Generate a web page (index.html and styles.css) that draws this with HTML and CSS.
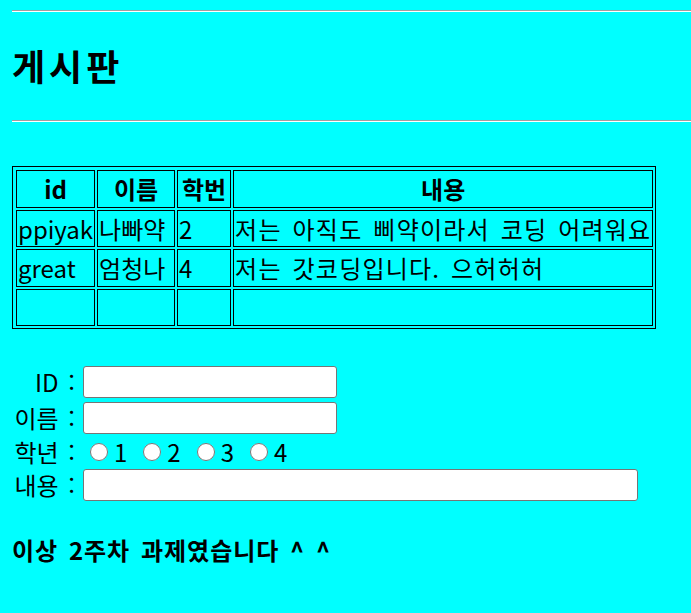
FILE: index.html
```html
<!DOCTYPE html>
<html lang="ko">
<head>
    <meta charset="UTF-8">
    <meta name="viewport" content="width=device-width, initial-scale=1.0">
    <title>게시판</title>
    <link rel="stylesheet" href="styles.css">
</head>
<body>
    <hr class="line">
    <h1 class="title">게시판</h1>
    <hr class="line">

    <table class="board">
        <tr>
            <th class="col-id">id</th>
            <th class="col-name">이름</th>
            <th class="col-num">학번</th>
            <th class="col-text">내용</th>
        </tr>
        <tr>
            <td>ppiyak</td>
            <td>나빠약</td>
            <td>2</td>
            <td class="text-cell">저는 아직도 삐약이라서 코딩 어려워요</td>
        </tr>
        <tr>
            <td>great</td>
            <td>엄청나</td>
            <td>4</td>
            <td class="text-cell">저는 갓코딩입니다. 으허허허</td>
        </tr>
        <tr>
            <td>&nbsp;</td>
            <td>&nbsp;</td>
            <td>&nbsp;</td>
            <td>&nbsp;</td>
        </tr>
    </table>

    <form class="write-form">
        <div class="form-row">
            <label class="form-label" for="user-id">ID :</label>
            <input class="form-input" type="text" id="user-id">
        </div>
        <div class="form-row">
            <label class="form-label" for="user-name">이름 :</label>
            <input class="form-input" type="text" id="user-name">
        </div>
        <div class="form-row grade-row">
            <span class="form-label">학년 :</span>
            <div class="grade-list">
                <label class="grade"><input type="radio" name="grade" value="1">1</label>
                <label class="grade"><input type="radio" name="grade" value="2">2</label>
                <label class="grade"><input type="radio" name="grade" value="3">3</label>
                <label class="grade"><input type="radio" name="grade" value="4">4</label>
            </div>
        </div>
        <div class="form-row">
            <label class="form-label" for="content">내용 :</label>
            <input class="form-input wide" type="text" id="content">
        </div>
    </form>

    <h3 class="footer">이상 2주차 과제였습니다 ^ ^</h3>
</body>
</html>
```

FILE: styles.css
```css
* {
    box-sizing: border-box;
}

body {
    margin: 0;
    padding: 10px 0 0 12px;
    background: #00ffff;
    color: #000;
    font-family: "Noto Sans CJK KR", "Noto Sans", sans-serif;
    font-size: 24px;
    word-spacing: 3px;
}

.line {
    margin: 0;
    height: 0;
    border: none;
    border-top: 1px solid #a0a0a0;
    border-bottom: 1px solid #ffffff;
}

.title {
    margin: 33px 0 35px;
    font-size: 36px;
    line-height: 40px;
    font-weight: 700;
    letter-spacing: 4px;
}

.board {
    margin-top: 44px;
    border: 1px solid #000;
    border-spacing: 2px;
    padding: 1px 0 0 1px;
}

.board th,
.board td {
    border: 1px solid #000;
    padding: 1px;
    line-height: 33.5px;
    font-size: 24px;
    white-space: nowrap;
}

.board th {
    font-weight: 700;
    text-align: center;
}

.board td {
    text-align: left;
}

.board .text-cell {
    letter-spacing: 1.2px;
}

.col-id {
    width: 77px;
}

.col-name {
    width: 78px;
}

.col-num {
    width: 54px;
}

.col-text {
    width: 420px;
}

.write-form {
    margin-top: 37px;
    display: flex;
    flex-direction: column;
    gap: 4px;
}

.form-row {
    display: flex;
    align-items: center;
    height: 32px;
}

.grade-row {
    height: 27px;
}

.form-label {
    width: 63px;
    text-align: right;
    white-space: nowrap;
    margin-right: 8px;
    line-height: 32px;
}

.form-input {
    width: 254px;
    height: 32px;
    border: 1px solid #767676;
    border-radius: 3px;
    background: #fff;
    font: inherit;
    padding: 0 4px;
}

.form-input.wide {
    width: 555px;
}

.grade-list {
    display: flex;
    align-items: center;
    gap: 16px;
    margin-left: 7px;
}

.grade {
    display: flex;
    align-items: center;
    gap: 6px;
    line-height: 27px;
}

.grade input {
    width: 18px;
    height: 18px;
    margin: 0;
}

.footer {
    margin: 32px 0 0;
    font-size: 24px;
    line-height: 34px;
    font-weight: 700;
    letter-spacing: 1px;
}
```
